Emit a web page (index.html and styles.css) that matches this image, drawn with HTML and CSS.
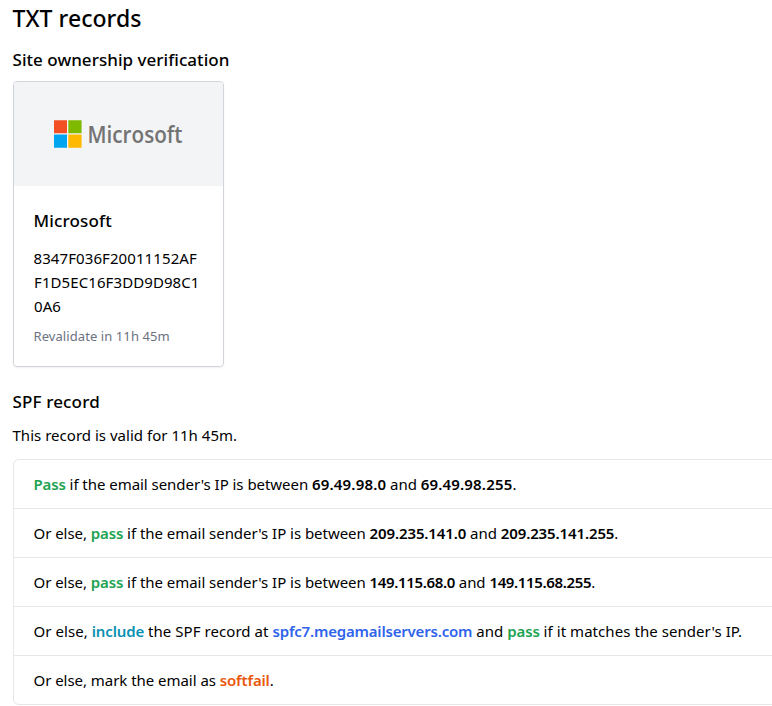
FILE: index.html
```html
<!DOCTYPE html>
<html lang="en">
<head>
<meta charset="utf-8">
<title>TXT records</title>
<link rel="stylesheet" href="styles.css">
</head>
<body>
<main class="page">
  <h1>TXT records</h1>
  <h2 class="site">Site ownership verification</h2>
  <article class="card">
    <div class="card-top">
      <svg class="logo" width="132" height="30" viewBox="0 0 132 30" role="img" aria-label="Microsoft">
        <path fill="#f25022" d="M1 1.3h13v13H1z"/>
        <path fill="#7fba00" d="M15.3 1.3h13.3v13H15.3z"/>
        <path fill="#00a4ef" d="M1 15.5h13v13.3H1z"/>
        <path fill="#ffb900" d="M15.3 15.5h13.3v13.3H15.3z"/>
        <text class="logo-text" x="34.5" y="23.7" textLength="95" lengthAdjust="spacingAndGlyphs">Microsoft</text>
      </svg>
    </div>
    <div class="card-body">
      <h3>Microsoft</h3>
      <p class="code">8347F036F20011152AF<br>F1D5EC16F3DD9D98C1<br>0A6</p>
      <p class="ttl">Revalidate in 11h 45m</p>
    </div>
  </article>
  <h2 class="spf">SPF record</h2>
  <p class="valid">This record is valid for 11h 45m.</p>
  <ul class="rules">
    <li><b class="pass">Pass</b> if the email sender's IP is between <b class="ip-wide">69.49.98.0</b> and <b class="ip-wide">69.49.98.255</b>.</li>
    <li>Or else, <b class="pass">pass</b> if the email sender's IP is between <b class="ip">209.235.141.0</b> and <b class="ip">209.235.141.255</b>.</li>
    <li>Or else, <b class="pass">pass</b> if the email sender's IP is between <b class="ip-narrow">149.115.68.0</b> and <b class="ip-narrow">149.115.68.255</b>.</li>
    <li class="include-rule">Or else, <b class="include">include</b> the SPF record at <b class="link">spfc7.megamailservers.com</b> and <b class="pass">pass</b> if it matches the sender's IP.</li>
    <li>Or else, mark the email as <b class="soft">softfail</b>.</li>
  </ul>
</main>
</body>
</html>
```
FILE: styles.css
```css
* { box-sizing: border-box; margin: 0; padding: 0; }
html { overflow: hidden; }
body { font: 15px/24px "Noto Sans", "Open Sans", sans-serif; color: #000; background: #fff; overflow: hidden; }
.page { padding: 2px 0 0 13px; width: 800px; }
h1 { font-size: 23px; line-height: 32px; font-weight: 500; letter-spacing: .05px; text-indent: -.5px; }
h2, h3 { font-size: 17px; line-height: 28px; font-weight: 550; letter-spacing: .04px; text-indent: -.5px; }
h3 { letter-spacing: .15px; }
.site { margin-top: 12px; margin-bottom: 7px; }
.card { width: 211px; height: 286px; border: 1px solid #d1d5db; border-radius: 4px; overflow: hidden; box-shadow: 0 1px 2px rgba(0,0,0,.06); }
.card-top { height: 104px; background: #f3f4f6; display: flex; align-items: center; justify-content: center; }
.logo { overflow: visible; }
.logo-text { font: 600 22.5px "Open Sans", sans-serif; fill: #737373; }
.card-body { padding: 21px 20px 20px; }
.code { margin-top: 11px; white-space: nowrap; letter-spacing: .09px; text-indent: -.5px; }
.ttl { font-size: 13px; line-height: 20px; margin-top: 8px; color: #6b7280; letter-spacing: .08px; text-indent: -.5px; }
.spf { margin-top: 21px; letter-spacing: .15px; }
.valid { margin-top: 7px; text-indent: -.5px; letter-spacing: .02px; }
.rules { list-style: none; margin-top: 12px; border: 1px solid #e5e7eb; border-radius: 6px; }
.rules li { height: 49px; padding: 12px 20px 12px 19.5px; border-bottom: 1px solid #e5e7eb; white-space: nowrap; letter-spacing: -.04px; }
.rules li:last-child { border: 0; height: 48px; }
.rules .include-rule { letter-spacing: .06px; }
b { font-weight: 600; letter-spacing: -.15px; }
.ip { letter-spacing: -.12px; }
.ip-wide { letter-spacing: .17px; }
.ip-narrow { letter-spacing: -.36px; }
.pass { color: #22a352; }
.include { color: #0891b2; }
.link { color: #2f63eb; letter-spacing: -.19px; }
.soft { color: #ea580c; }
```
